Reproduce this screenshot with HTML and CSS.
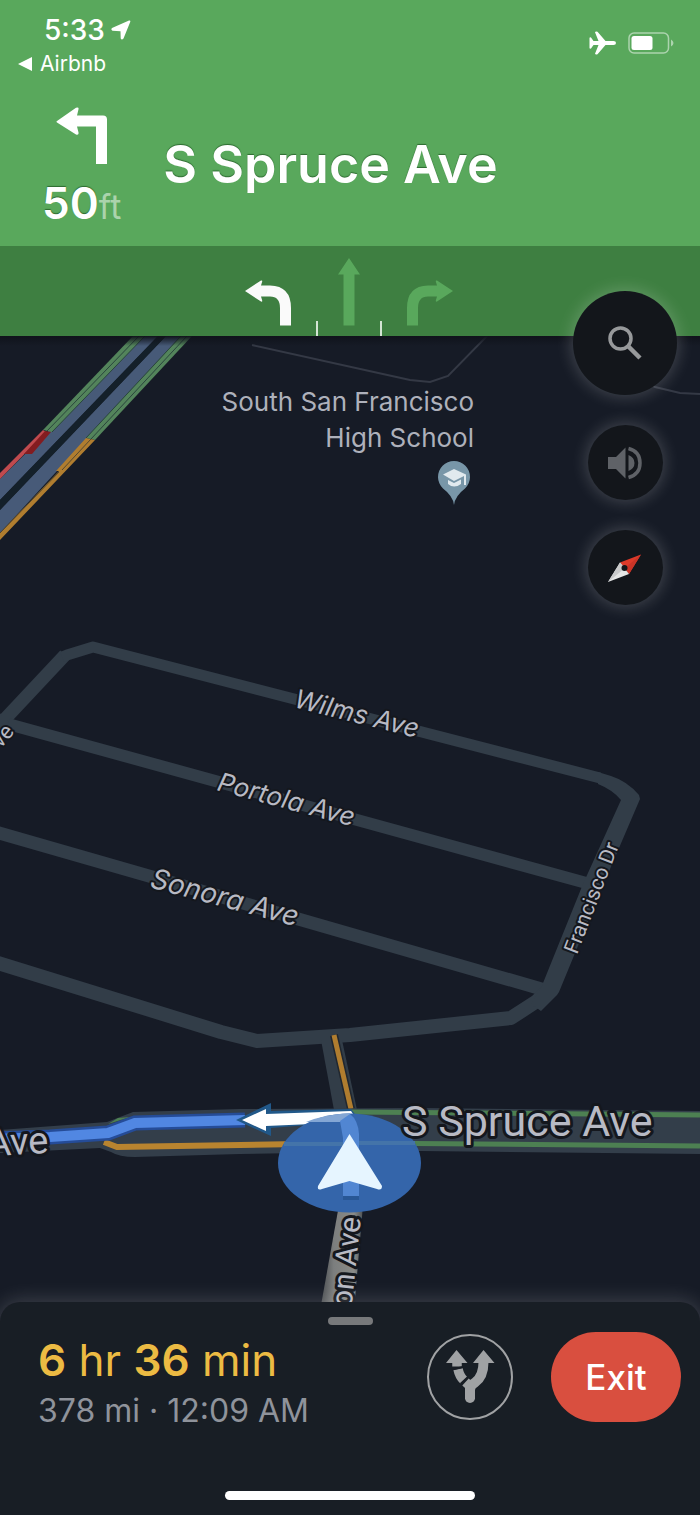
FILE: index.html
```html
<!DOCTYPE html>
<html lang="en">
<head>
<meta charset="utf-8">
<meta name="viewport" content="width=device-width, initial-scale=1">
<title>Navigation</title>
<link rel="stylesheet" href="styles.css">
</head>
<body>
<div class="app">
  <header class="top">
    <div class="status">
      <div class="status-left">
        <div class="clock">5:33
          <svg class="location" viewBox="0 0 20 20" aria-hidden="true"><path d="M1 8 18 .6q1.600-.5 1.300 1.100L12.500 18.500q-1.700 2.200-2.800 0L9.500 11.200 1.500 10.700Q-.500 9.500 1 8z" fill="#fff"/></svg>
        </div>
        <a class="back" href="#airbnb"><span class="back-mark"></span>Airbnb</a>
      </div>
      <div class="status-right">
        <svg class="plane" viewBox="0 0 28 24" aria-hidden="true"><path d="M27 12q0 2-2.500 2h-8L8.500 23.200q-2 .8-2.500-.5L9.500 14H4.500L2 17.500q-1.300.5-1.500-.5V7q.2-1 1.500-.5L4.500 10h5L6 1.300Q6.500 0 8.500.8L16.500 10h8Q27 10 27 12z" fill="#fff"/></svg>
        <svg class="battery" viewBox="0 0 46 22" aria-hidden="true"><rect x="1" y="1" width="39.500" height="20" rx="5" fill="none" stroke="#fff" stroke-opacity=".5" stroke-width="1.500"/><rect x="3.500" y="4" width="21" height="14" rx="2.500" fill="#fff"/><path d="M43 7.500q2.500 1.500 2.500 3.500T43 14.500z" fill="#fff" fill-opacity=".5"/></svg>
      </div>
    </div>
    <div class="maneuver">
      <div class="step">
        <svg class="turn" viewBox="0 0 51 58" aria-hidden="true"><path d="M1 14 20 .8q3-1.200 2.500 1.500L21 8.500h26q4 0 4 4V57H40V19.500H21l1.500 6q.5 3-2.500 2L1 15.500q-1.200-.7 0-1.500z" fill="#fff"/></svg>
        <div class="distance">50<span class="unit">ft</span></div>
      </div>
      <h1 class="street">S Spruce Ave</h1>
    </div>
    <div class="lanes">
      <svg class="lane lane-turn" viewBox="0 0 46 46" aria-label="Left lane"><path d="M0 11 16 .5q1.500-.500 1.200 1L16 5.500h9Q46 6 46 28v17.500H35V28Q35 16.500 25 16.500h-9l1.200 4q.3 1.500-1.200 1z" fill="#fafafa"/></svg>
      <span class="divider"></span>
      <svg class="lane lane-through" viewBox="0 0 22 68" aria-label="Through lane"><path d="M11 0 22 16.500h-5.500V67.500h-11V16.500H0z" fill="#59a85c"/></svg>
      <span class="divider"></span>
      <svg class="lane lane-turn" viewBox="0 0 46 46" aria-label="Right lane"><path d="M46 11 30 .5q-1.500-.500-1.200 1L30 5.500h-9Q0 6 0 28v17.500h11V28Q11 16.500 21 16.500h9l-1.200 4q-.3 1.500 1.200 1z" fill="#59a85c"/></svg>
    </div>
  </header>

  <main class="map-area">
    <svg class="map" viewBox="0 336 700 986" preserveAspectRatio="xMidYMid slice" role="img" aria-label="Map">
      <defs>
        <linearGradient id="tail" x1="0" x2="1"><stop offset="0" stop-color="#3d4145"/><stop offset=".35" stop-color="#7c7e7e"/><stop offset=".8" stop-color="#8a8b88"/><stop offset="1" stop-color="#4c5053"/></linearGradient>
        <linearGradient id="shade" x1="0" x2="0" y1="0" y2="1"><stop offset="0" stop-color="#10131b"/><stop offset="1" stop-color="#10131b" stop-opacity="0"/></linearGradient>
      </defs>
      <!-- freeway -->
      <path d="M144 336h14L0 500v-21z" fill="#475a78"/>
      <path d="M166 336h15L0 533v-23z" fill="#475a78"/>
      <path d="M158 336h8L0 510v-10z" fill="#14202a"/>
      <path d="M133 336h12L52 432l-9-2z" fill="#53845b"/>
      <path d="M139 336 47 431M145 336 52 432" stroke="#2a463d" fill="none"/>
      <path d="M181 336h11L95 440l-9-2z" fill="#53845b"/>
      <path d="M187 336 91 439M181 336 86 438" stroke="#2a463d" fill="none"/>
      <path d="M43 430 0 473v6l46-47z" fill="#c04a4e"/>
      <path d="M45 431 24 454h8l19-22z" fill="#831c20"/>
      <path d="M86 438l9 2L0 540v-7l59-62h-3z" fill="#b07d2f"/>
      <path d="M91 439 62 470M59 472 0 533" stroke="#55482f" fill="none"/>
      <!-- minor outlines -->
      <path d="M252 345 410 380 430 382 448 376 489 334M640 379 655 387 680 393 702 394" fill="none" stroke="#343945" stroke-width="2"/>
      <!-- local streets -->
      <g fill="none" stroke="#323d48" stroke-linejoin="round">
        <path d="M-8 732 5 718" stroke-width="17"/>
        <path d="M5 719 65 655" stroke-width="13"/>
        <path d="M62 657 67 655 93 647 600 778" stroke-width="11"/>
        <path d="M8 724 590 884" stroke-width="12"/>
        <path d="M-4 832 545 990" stroke-width="13"/>
        <path d="M550 988 537 1001 511 1018 350 1035 257 1041 221 1032-5 962" stroke-width="14"/>
      </g>
      <path d="M598 772 611 776Q627 781 639 795L640 799 601 890 559 992 557 995 541 1011 531 1004 541 988 583 884 621 800Q613 790 598 784z" fill="#323d48"/>
      <path d="M321 1040h21l15 70h-23z" fill="#323d48"/>
      <path d="M334 1035 351 1109" stroke="#20272f" stroke-width="8"/>
      <path d="M334 1035 351 1109" stroke="#b07d2f" stroke-width="5"/>
      <!-- S Spruce Ave -->
      <path d="M0 1130 107 1122 133 1112 240 1109 420 1108 700 1111V1154L420 1151 240 1154 135 1157Q119 1157 111 1152L100 1148 0 1153z" fill="#333e4a"/>
      <path d="M350 1112 700 1115M350 1143 700 1146" stroke="#4d8052" stroke-width="5"/>
      <path d="M104 1142 117 1147 240 1145 300 1144" stroke="#b9842f" stroke-width="6" fill="none"/>
      <path d="M108 1124 118 1118 130 1117z" fill="#4d8052"/>
      <path d="M-5 1139 50 1137 108 1133 135 1123 245 1120" stroke="#254c98" stroke-width="15" fill="none"/>
      <path d="M-5 1139 50 1137 108 1133 135 1123 245 1120" stroke="#5187e2" stroke-width="10" fill="none"/>
      <!-- road travelled -->
      <path d="M339 1205h24L353 1322H318z" fill="url(#tail)"/>
      <!-- next turn -->
      <path d="M236 1120 271 1103v8L351 1109 358 1118 345 1122 271 1128v8z" fill="#215889"/>
      <path d="M242 1120 266 1109v5L351 1111 355 1117 312 1124 266 1126v5z" fill="#fff"/>
      <!-- current position -->
      <ellipse cx="349.500" cy="1163" rx="71.500" ry="49.500" fill="#3465aa"/>
      <path d="M306 1122Q322 1115 350 1113V1122z" fill="#83a6d4"/>
      <path d="M350 1114Q358 1120 359 1134V1197H343V1138L340 1121z" fill="#5186d2"/>
      <path d="M284 1144H343M359 1143H415" stroke="#4474a9" stroke-width="4"/>
      <path d="M343 1196h16v4h-16z" fill="#285796"/>
      <path d="M349.500 1134 382 1186Q382 1191 377 1189L349.500 1181 322 1189Q317 1191 318 1186z" fill="#e6f5ff"/>
      <!-- school -->
      <g class="place" text-anchor="end"><text x="474" y="411">South San Francisco</text><text x="474" y="447">High School</text></g>
      <path d="M454 505Q453 496 443 488.500A16 16 0 1 1 465 488.500Q455 496 454 505z" fill="#7896a8"/>
      <path d="M454 469 466 474.500V485h-2V476l-10 5-11-6.500z" fill="#e1e9ee"/>
      <path d="M448 480 454 483 461 479.500V484Q454 489 448 484z" fill="#e1e9ee"/>
      <!-- street names -->
      <g class="road">
        <text class="slant" transform="translate(293 707) rotate(14)">Wilms Ave</text>
        <text class="slant" transform="translate(216 790) rotate(15)">Portola Ave</text>
        <text class="slant wide" transform="translate(149 887) rotate(15)">Sonora Ave</text>
        <text class="upright" transform="translate(577 955) rotate(-69)">Francisco Dr</text>
        <text class="small" text-anchor="end" transform="translate(15 732) rotate(-50)">ve</text>
        <text class="major" x="402" y="1136">S Spruce Ave</text>
        <text class="near" text-anchor="end" transform="translate(49 1153) rotate(-3)">Ave</text>
        <text class="tail" text-anchor="end" transform="translate(361 1218) rotate(-84)">ion Ave</text>
      </g>
      <rect y="336" width="700" height="10" fill="url(#shade)"/>
    </svg>
    <div class="controls">
      <button class="round large" type="button" aria-label="Search"><svg viewBox="0 0 34 34" width="34" height="34" aria-hidden="true"><circle cx="12.500" cy="12.500" r="10.500" fill="none" stroke="#97999b" stroke-width="3.500"/><path d="M20.500 20.500 32 32" stroke="#97999b" stroke-width="4.500"/></svg></button>
      <button class="round" type="button" aria-label="Sound"><svg viewBox="0 0 34 34" width="34" height="34" aria-hidden="true"><path d="M0 11h8L17.500 1.500v31L8 23H0zM20.500 9q6 2.500 6 8t-6 8z" fill="#5f6267"/><path d="M20.500 2.500Q32 5.500 32 17T20.500 31.500" fill="none" stroke="#5f6267" stroke-width="3.500"/></svg></button>
      <button class="round" type="button" aria-label="Compass"><svg viewBox="0 0 36 30" width="36" height="30" aria-hidden="true"><path d="M34 1.500 13 9.500 22 21z" fill="#dd3a2a"/><path d="M34 1.500 18 15 22 21z" fill="#c93427"/><path d="M1 29 13 9.500 22 21z" fill="#e5e6e6"/><path d="M1 29 13 9.500 18 15z" fill="#c9cacb"/><circle cx="17.500" cy="15" r="3" fill="#14171c"/></svg></button>
    </div>
  </main>

  <section class="sheet">
    <div class="handle"></div>
    <div class="trip">
      <div class="summary">
        <div class="duration"><b>6</b> hr <b>36</b> min</div>
        <div class="details">378 mi · 12:09 AM</div>
      </div>
      <div class="actions">
        <button class="routes" type="button" aria-label="Alternate routes"><svg viewBox="0 0 50 56" width="50" height="56" aria-hidden="true"><g fill="none" stroke="#a0a2a4"><path d="M25 50V41Q25 36.500 30 33.500 38.500 27.500 38.500 13" stroke-width="10"/><path d="M25 49V38" stroke-width="10" stroke-linecap="round"/><path d="M12 13V17.500M13 20Q14.500 27.500 19 31.500M20.500 33 26 38" stroke-width="9.500"/></g><path d="M11.500 1 22.500 14H1zM38.500 1 49.500 14H28z" fill="#a0a2a4"/><path d="M7 20.500 18.500 18M15.500 35 22.500 28.500" stroke="#181d24" stroke-width="2"/></svg></button>
        <button class="exit" type="button">Exit</button>
      </div>
    </div>
    <div class="home"></div>
  </section>
</div>
</body>
</html>
```
FILE: styles.css
```css
* { box-sizing: border-box; }
body { margin: 0; background: #181d24; font-family: Inter, "Liberation Sans", sans-serif; }
button { margin: 0; padding: 0; border: 0; font: inherit; cursor: pointer; }
svg { display: block; flex: none; }

.app { display: flex; flex-direction: column; min-height: 100vh; overflow: hidden; }

.top { background: #59a85c; color: #fff; }
.status { display: flex; justify-content: space-between; padding: 14px 26px 0 18px; }
.clock { display: flex; align-items: center; gap: 6px; padding-left: 26px; font-size: 28px; font-weight: 500; line-height: 32px; }
.location { width: 20px; height: 20px; }
.back { display: flex; align-items: center; gap: 8px; margin-top: 4px; color: #fff; font-size: 21px; line-height: 28px; text-decoration: none; }
.back-mark { border: 7px solid transparent; border-left: 0; border-right: 14px solid #fff; }
.status-right { display: flex; align-items: center; gap: 11px; height: 58px; }
.plane { width: 28px; height: 24px; }
.battery { width: 46px; height: 22px; }

.maneuver { display: flex; align-items: center; gap: 42px; height: 168px; padding: 6px 42px 0; }
.step { display: flex; flex-direction: column; align-items: center; margin-top: 6px; }
.turn { width: 51px; height: 58px; }
.distance { margin-top: 16px; font-size: 44px; font-weight: 600; line-height: 44px; text-shadow: 0 -1px 1px #2d6a30; }
.unit { color: #abd3ac; font-size: 34px; font-weight: 400; text-shadow: none; }
.street { margin: 0; font-size: 52px; font-weight: 600; line-height: 64px; text-shadow: 0 -1px 1px #2d6a30; }

.lanes { display: flex; justify-content: center; align-items: flex-end; height: 90px; padding-right: 2px; background: #3e7f41; }
.lane { margin-bottom: 10px; }
.lane-turn { width: 46px; height: 46px; margin-left: 25px; margin-right: 25px; }
.lane-through { width: 22px; height: 68px; margin-left: 20px; margin-right: 20px; }
.divider { width: 2px; height: 15px; background: #d4e4d4; }

.map-area { position: relative; flex: 1; display: flex; min-height: 480px; background: #161b26; }
.map { flex: 1; width: 100%; height: auto; min-width: 0; }
.place { fill: #aeb1bb; stroke: #161b26; stroke-width: 3px; paint-order: stroke; font-size: 26px; }
.road { fill: #b8bac4; stroke: #14171d; stroke-width: 6px; stroke-linejoin: round; paint-order: stroke; font-family: Roboto, "Liberation Sans", sans-serif; }
.slant { font-family: Inter, sans-serif; font-size: 26px; font-style: italic; stroke-width: 4px; }
.wide { font-size: 28px; }
.upright { font-size: 21px; stroke-width: 4px; }
.small { font-size: 22px; stroke-width: 4px; }
.major { font-size: 43px; }
.near { font-size: 38px; }
.tail { font-size: 30px; }

.controls { position: absolute; top: -45px; right: 23px; display: flex; flex-direction: column; align-items: center; gap: 30px; }
.round { display: grid; place-items: center; width: 75px; height: 75px; border-radius: 50%; background: #13161b; box-shadow: 0 0 16px 2px #ffffff30; }
.large { width: 104px; height: 104px; }

.sheet { position: relative; margin-top: -20px; padding: 15px 19px; border-radius: 20px 20px 0 0; background: #181e25; box-shadow: 0 0 20px 2px #ffffff2c; }
.handle { width: 45px; height: 8px; margin: 0 auto; border-radius: 4px; background: #77797b; }
.trip { display: flex; align-items: flex-start; padding: 7px 0 0 19px; }
.summary { flex: 1; }
.duration { color: #ecbb43; font-size: 44px; line-height: 56px; }
.duration b { font-weight: 600; }
.details { color: #8f939b; font-size: 32px; line-height: 46px; }
.actions { display: flex; align-items: center; gap: 38px; }
.routes { display: grid; place-items: center; width: 86px; height: 86px; border: 2px solid #a0a2a4; border-radius: 50%; background: none; }
.exit { width: 130px; height: 90px; border-radius: 45px; background: #d94f3f; color: #fff; font-size: 35px; font-weight: 500; }
.home { width: 250px; height: 9px; margin: 57px auto 0; border-radius: 5px; background: #fff; }
```
